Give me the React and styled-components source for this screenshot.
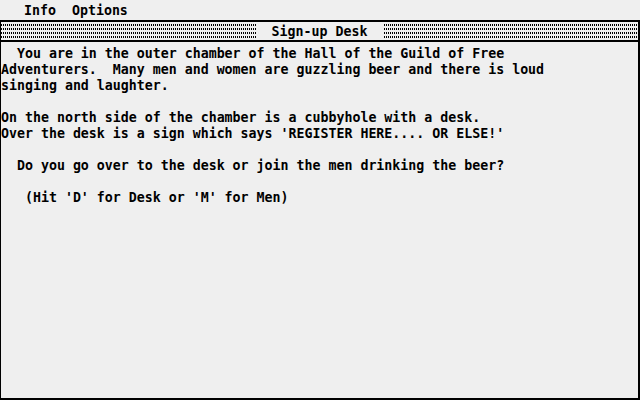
import React from "react";
import styled, { createGlobalStyle } from "styled-components";

const lines = [
  "  You are in the outer chamber of the Hall of the Guild of Free",
  "Adventurers.  Many men and women are guzzling beer and there is loud",
  "singing and laughter.",
  "",
  "On the north side of the chamber is a cubbyhole with a desk.",
  "Over the desk is a sign which says 'REGISTER HERE.... OR ELSE!'",
  "",
  "  Do you go over to the desk or join the men drinking the beer?",
  "",
  "   (Hit 'D' for Desk or 'M' for Men)"
];

export default function App() {
  return (
    <Screen>
      <GlobalStyle />
      <MenuBar>
        <MenuTitle>Info</MenuTitle>
        <MenuTitle>Options</MenuTitle>
      </MenuBar>
      <Window>
        <TitleBar>
          <Pattern />
          <Title>Sign-up Desk</Title>
          <Pattern />
        </TitleBar>
        <Content>
          {lines.map((line, i) => (
            <Line key={i}>{line}</Line>
          ))}
        </Content>
      </Window>
    </Screen>
  );
}

const GlobalStyle = createGlobalStyle`
  html, body {
    margin: 0;
    padding: 0;
    background: #efefef;
  }
`;

// 8x16 character cells like the ST system font
const Screen = styled.div`
  width: 640px;
  height: 400px;
  display: flex;
  flex-direction: column;
  background: #efefef;
  color: #000;
  font-family: "DejaVu Sans Mono", "Liberation Mono", monospace;
  font-weight: bold;
  font-size: 13.28px;
  line-height: 16px;
  white-space: pre;
  overflow: hidden;
`;

const MenuBar = styled.div`
  height: 20px;
  display: flex;
  align-items: center;
  gap: 16px;
  padding-left: 24px;
`;

const MenuTitle = styled.div`
  height: 16px;
  margin-top: 1px;
`;

const Window = styled.div`
  flex: 1;
  display: flex;
  flex-direction: column;
  border-top: 2px solid #000;
  border-left: 1px solid #000;
  border-right: 2px solid #000;
  border-bottom: 2px solid #000;
`;

const TitleBar = styled.div`
  height: 20px;
  display: flex;
  border-bottom: 2px solid #000;
  padding-top: 2px;
  box-sizing: border-box;
`;

const Pattern = styled.div`
  flex: 1;
  background:
    repeating-linear-gradient(
      to bottom,
      transparent 0 2px,
      #efefef 2px 4px
    ),
    repeating-linear-gradient(
      to right,
      #000 0 1px,
      #efefef 1px 2px
    );
`;

const Title = styled.div`
  width: 128px;
  margin-top: -1px;
  display: flex;
  justify-content: center;
  align-items: center;
`;

const Content = styled.div`
  flex: 1;
  padding-top: 4px;
`;

const Line = styled.div`
  height: 16px;
`;
